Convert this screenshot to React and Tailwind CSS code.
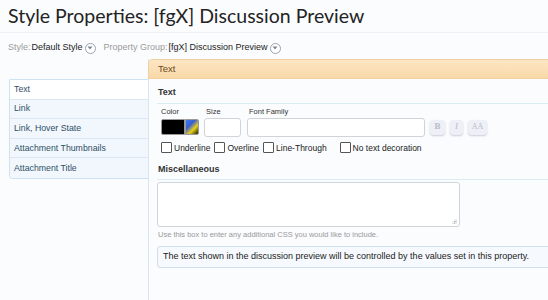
import React from 'react';

function DropCircle() {
  return (
    <span className="inline-flex items-center justify-center w-[11px] h-[11px] rounded-full border border-[#9aa3ad] bg-white ml-[1px] align-middle">
      <svg width="6" height="4" viewBox="0 0 6 4">
        <path d="M0.5 0.5 L3 3.5 L5.5 0.5 Z" fill="#7d8791" />
      </svg>
    </span>
  );
}

function Check({ label }) {
  return (
    <label className="flex items-center gap-[2px]">
      <span className="w-[11px] h-[11px] border border-[#555] bg-white rounded-[1px]"></span>
      <span>{label}</span>
    </label>
  );
}

const tabs = ['Text', 'Link', 'Link, Hover State', 'Attachment Thumbnails', 'Attachment Title'];

export default function App() {
  return (
    <div className="w-[548px] h-[300px] overflow-hidden bg-[#fbfcfe] text-[#222] font-['Liberation_Sans',sans-serif]">
      {/* Title */}
      <div className="h-[33px] border-b border-[#eef1f5] pl-[8px] pt-[3px]">
        <h1 className="text-[19.5px] leading-[26px] text-[#232323] font-['Lato',sans-serif]">Style Properties: [fgX] Discussion Preview</h1>
      </div>

      {/* Selectors */}
      <div className="h-[28px] flex items-center pl-[8px] pt-[2px] text-[9px] gap-[8px]">
        <span className="flex items-center gap-[1px]">
          <span className="text-[#9b9b9b]">Style:</span>
          <span className="text-[#222]">Default Style</span>
          <DropCircle />
        </span>
        <span className="flex items-center gap-[1px]">
          <span className="text-[#9b9b9b]">Property Group:</span>
          <span className="text-[#222]">[fgX] Discussion Preview</span>
          <DropCircle />
        </span>
      </div>

      <div className="flex -mt-[2px]">
        {/* Tabs */}
        <div className="w-[148px] shrink-0 pl-[9px] pt-[20px]">
          <div className="border border-r-0 border-[#cfe2ef] rounded-bl-[4px] rounded-tl-[2px] text-[8.75px] text-[#2f4f66] overflow-hidden">
            {tabs.map((t, i) => (
              <div
                key={t}
                className={
                  i === 0
                    ? 'h-[19.6px] flex items-center pl-[4px] bg-white border-b border-[#dbe8f2]'
                    : 'h-[19.6px] flex items-center pl-[4px] bg-[#f1f7fc] border-b border-[#dbe8f2] last:border-b-0'
                }
              >
                {t}
              </div>
            ))}
          </div>
        </div>

        {/* Panel */}
        <div className="flex-1 border-l border-[#d7e6f0] h-[250px]">
          <div className="h-[20px] -ml-[1px] border border-r-0 border-[#f0cfa0] rounded-tl-[5px] bg-gradient-to-b from-[#fde6c4] to-[#f8d8a8] pl-[9px] flex items-center text-[9.5px] text-[#6d4a1c]">
            Text
          </div>

          <div className="pl-[8px]">
            <div className="mt-[7px] text-[9px] font-bold text-[#333] pb-[3px] border-b border-[#dcecf5] pl-[1px]">Text</div>

            <div className="flex pl-[4px] pt-[3px] text-[7.5px] text-[#333]">
              <div className="w-[43px]">
                <div className="h-[9px] leading-[9px]">Color</div>
                <div className="flex mt-[3px]">
                  <div className="w-[24px] h-[16px] bg-black border border-[#999] rounded-l-[2px]"></div>
                  <div className="w-[14px] h-[16px] border border-[#999] rounded-r-[2px] bg-[linear-gradient(135deg,#3b7bff_0%,#3a5fcf_35%,#e8d21a_65%,#1a1a00_100%)]"></div>
                </div>
              </div>
              <div className="w-[43px]">
                <div className="h-[9px] leading-[9px] pl-[2px]">Size</div>
                <div className="mt-[2px] w-[37px] h-[19px] bg-white border border-[#d0d4d8] rounded-[3px]"></div>
              </div>
              <div>
                <div className="h-[9px] leading-[9px] pl-[2px]">Font Family</div>
                <div className="flex items-center mt-[2px]">
                  <div className="w-[178px] h-[19px] bg-white border border-[#d0d4d8] rounded-[3px]"></div>
                  <div className="flex gap-[5px] ml-[5px] font-['Liberation_Serif',serif] text-[#b8bcc6]">
                    <span className="w-[15px] h-[15px] flex items-center justify-center rounded-[4px] bg-[#eef0f7] shadow-[0_1px_2px_#c9ccd8] text-[9px] font-bold">B</span>
                    <span className="w-[13px] h-[15px] flex items-center justify-center rounded-[4px] bg-[#eef0f7] shadow-[0_1px_2px_#c9ccd8] text-[9px] italic">I</span>
                    <span className="w-[19px] h-[15px] flex items-center justify-center rounded-[4px] bg-[#eef0f7] shadow-[0_1px_2px_#c9ccd8] text-[8px]">AA</span>
                  </div>
                </div>
              </div>
            </div>

            <div className="flex items-center pl-[4px] mt-[5px] text-[8.5px] text-[#222] gap-[4px]">
              <Check label="Underline" />
              <Check label="Overline" />
              <Check label="Line-Through" />
              <span className="w-[5px]"></span>
              <Check label="No text decoration" />
            </div>

            <div className="mt-[9px] text-[9px] font-bold text-[#333] pb-[2px] border-b border-[#dcecf5] pl-[1px]">Miscellaneous</div>

            <div className="mt-[2px] w-[303px] h-[45px] bg-white border border-[#d0d4d8] rounded-[3px] relative">
              <svg className="absolute right-[2px] bottom-[2px]" width="5" height="5" viewBox="0 0 5 5">
                <circle cx="4" cy="1" r="0.6" fill="#999" />
                <circle cx="2.5" cy="2.5" r="0.6" fill="#999" />
                <circle cx="4" cy="2.5" r="0.6" fill="#999" />
                <circle cx="1" cy="4" r="0.6" fill="#999" />
                <circle cx="2.5" cy="4" r="0.6" fill="#999" />
                <circle cx="4" cy="4" r="0.6" fill="#999" />
              </svg>
            </div>
            <div className="mt-[2px] pl-[1px] text-[7.5px] text-[#9a9a9a]">Use this box to enter any additional CSS you would like to include.</div>

            <div className="mt-[6px] h-[22px] border border-r-0 border-[#cfe0ec] rounded-l-[4px] bg-[#f6f9fd] flex items-center pl-[5px] text-[9px] text-[#222]">
              The text shown in the discussion preview will be controlled by the values set in this property.
            </div>
          </div>
        </div>
      </div>
    </div>
  );
}
